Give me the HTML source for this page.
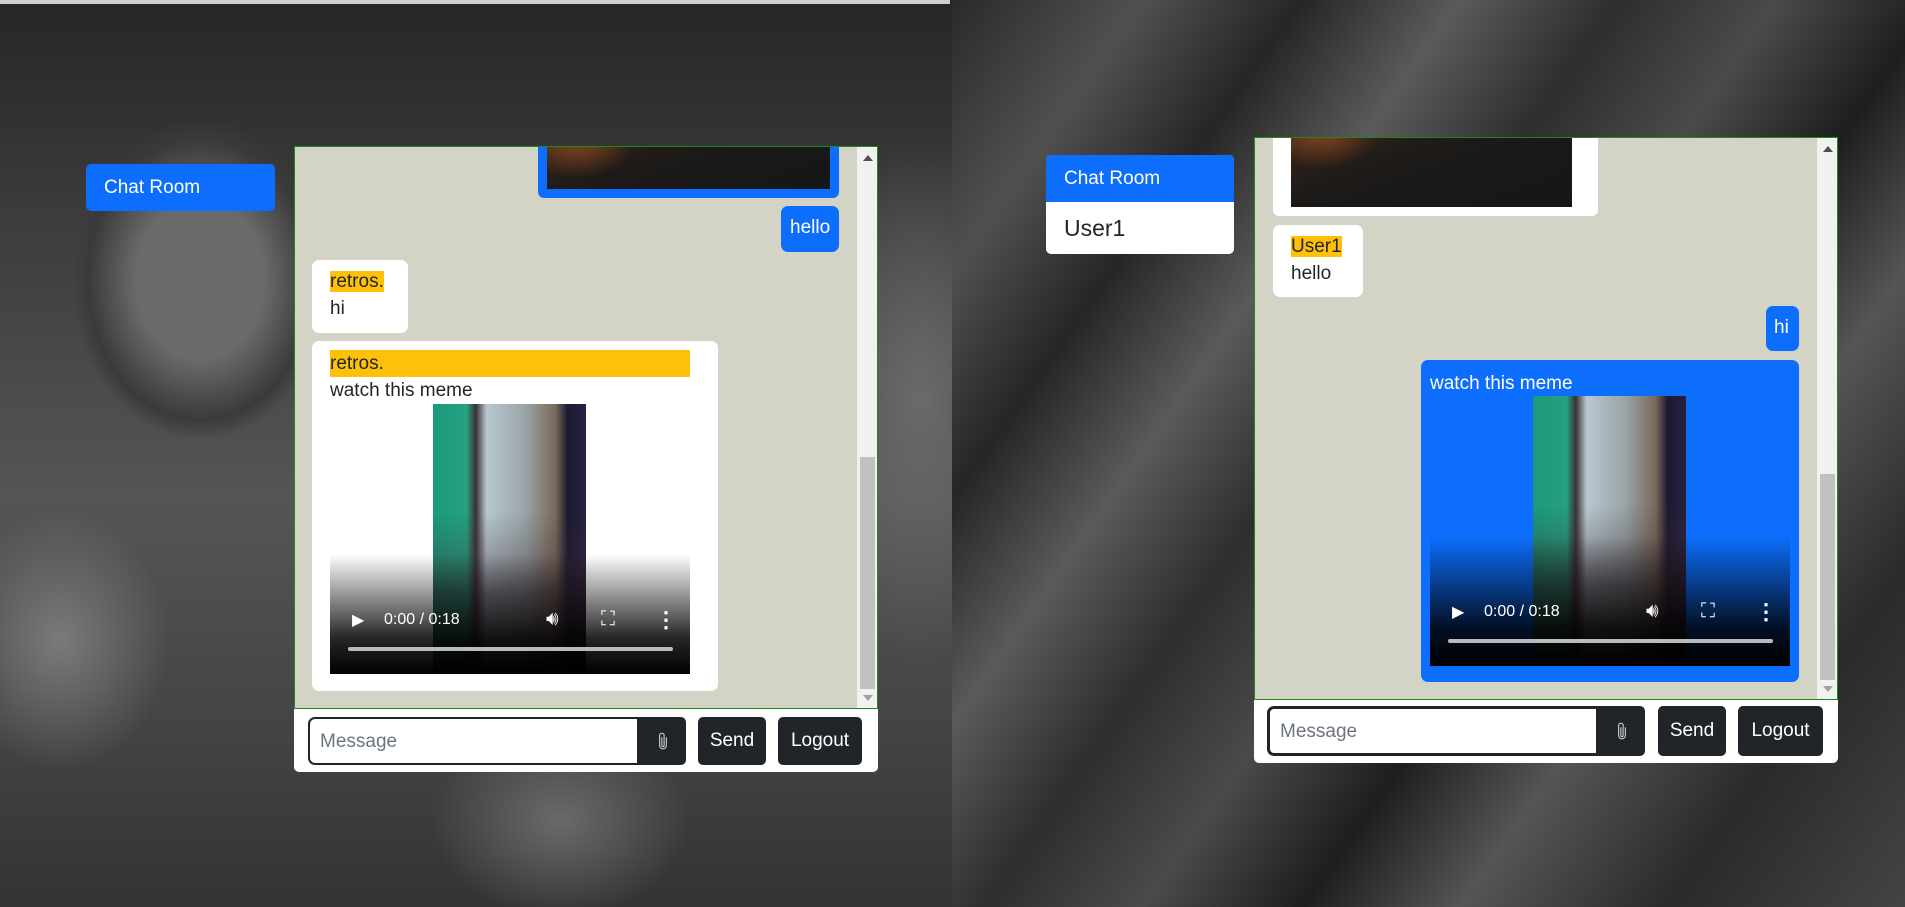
<!DOCTYPE html>
<html><head><meta charset="utf-8"><style>
*{box-sizing:border-box;margin:0;padding:0}
body{width:1905px;height:907px;overflow:hidden;position:relative;font-family:"Liberation Sans",sans-serif;font-size:19px;color:#212529}
.a{position:absolute}
.bgL{left:0;top:0;width:952px;height:907px;background:
radial-gradient(ellipse 110px 130px at 60px 640px,#7a7a7a,transparent),
radial-gradient(ellipse 130px 100px at 560px 820px,#6a6a6a,transparent),
radial-gradient(ellipse 160px 200px at 200px 280px,#6a6a6a 40%,#3a3a3a 70%,transparent 80%),
radial-gradient(ellipse 120px 260px at 920px 400px,#6a6a6a,transparent),
linear-gradient(180deg,#262626 0,#3d3d3d 25%,#555 55%,#444 80%,#333 100%)}
.bgR{left:952px;top:0;width:953px;height:907px;background:
linear-gradient(125deg,#2a2a2a 0,#505050 12%,#262626 22%,#5a5a5a 32%,#2e2e2e 42%,#4a4a4a 52%,#1e1e1e 62%,#555 72%,#2a2a2a 85%,#444 100%)}
.topline{left:0;top:0;width:950px;height:4px;background:#cfcfcf}
.btnb{background:#0d6efd;color:#fff;border-radius:5px}
.box{background:#d3d4c6;border:1px solid #1a8a1a;overflow:hidden}
.sb{background:#f1f1f1}
.th{background:#c1c1c1}
.bub{border-radius:7px}
.w{background:#fff}
.name{background:#ffc107}
.dark{background:#212529;color:#fff;border-radius:5px;text-align:center}
.vid{background:#fff}
.frame{background:
radial-gradient(ellipse 20px 30px at 40px 300px,#d8d040,transparent),
linear-gradient(180deg,transparent 0,transparent 40%,rgba(60,40,50,.5) 70%),
linear-gradient(90deg,#1a9a7a 0,#26a080 22%,#3a3035 28%,#b8c8d0 35%,#9aa5a8 60%,#7a6a5a 80%,#1a1a30 88%,#2a2040 100%)}
.ctrl{color:#fff;font-size:16px}
.img{background:radial-gradient(ellipse 60px 40px at 30px 0,#8a4a20,transparent),linear-gradient(160deg,#3a2618 0,#1d1a18 40%,#141618 100%)}
</style></head><body>
<div class="a bgL"></div><div class="a bgR"></div><div class="a topline"></div>

<svg width="0" height="0" style="position:absolute"><defs><symbol id="clip" viewBox="0 0 16 16"><path d="M4.5 3a2.5 2.5 0 0 1 5 0v9a1.5 1.5 0 0 1-3 0V5a.5.5 0 0 1 1 0v7a.5.5 0 0 0 1 0V3a1.5 1.5 0 1 0-3 0v9a2.5 2.5 0 0 0 5 0V5a.5.5 0 0 1 1 0v7a3.5 3.5 0 1 1-7 0V3z" fill="#ccc"/></symbol></defs></svg>

<!-- LEFT -->
<div class="a btnb" style="left:86px;top:164px;width:189px;height:47px;padding:13px 18px;font-size:19px">Chat Room</div>
<div class="a box" style="left:294px;top:146px;width:584px;height:563px">
  <div class="a btnb" style="left:243px;top:-10px;width:301px;height:61px;border-radius:0 0 6px 6px"></div>
  <div class="a img" style="left:252px;top:-10px;width:283px;height:52px"></div>
  <div class="a btnb bub" style="left:486px;top:59px;width:58px;height:46px;padding:11px 9px">hello</div>
  <div class="a w bub" style="left:17px;top:113px;width:96px;height:73px;padding:8px 18px;line-height:27px"><span class="name">retros.</span><br>hi</div>
  <div class="a w bub" style="left:17px;top:194px;width:406px;height:350px">
    <div class="a name" style="left:18px;top:9px;width:360px;height:27px;line-height:27px">retros.</div>
    <div class="a" style="left:18px;top:36px;line-height:27px">watch this meme</div>
    <div class="a vid" style="left:18px;top:63px;width:360px;height:270px">
      <div class="a frame" style="left:103px;top:0;width:153px;height:270px"></div>
      <div class="a" style="left:0;top:150px;width:360px;height:120px;background:linear-gradient(180deg,rgba(0,0,0,0),rgba(0,0,0,.85) 70%,#000)"></div>
      <div class="a ctrl" style="left:22px;top:206px">▶</div>
      <div class="a ctrl" style="left:54px;top:207px">0:00 / 0:18</div>
      <div class="a ctrl" style="left:216px;top:204px;font-size:20px">🔊︎</div>
      <div class="a ctrl" style="left:271px;top:204px;font-size:20px">⛶</div>
      <div class="a ctrl" style="left:325px;top:203px;font-size:22px;font-weight:bold">⋮</div>
      <div class="a" style="left:18px;top:243px;width:325px;height:4px;background:#bbb;border-radius:2px"></div>
    </div>
  </div>
  <div class="a sb" style="left:562px;top:0;width:21px;height:562px">
    <div class="a" style="left:6px;top:8px;border:5px solid transparent;border-bottom:6px solid #505050;border-top:0"></div>
    <div class="a th" style="left:3px;top:310px;width:15px;height:232px"></div>
    <div class="a" style="left:6px;top:548px;border:5px solid transparent;border-top:6px solid #a0a0a0;border-bottom:0"></div>
  </div>
</div>
<div class="a w" style="left:294px;top:709px;width:584px;height:63px;border-radius:0 0 5px 5px">
  <div class="a" style="left:14px;top:8px;width:331px;height:48px;border:2px solid #212529;border-radius:7px 0 0 7px;padding:12px 10px;color:#6c757d;font-size:19px">Message</div>
  <div class="a dark" style="left:345px;top:8px;width:47px;height:48px;border-radius:0 5px 5px 0;padding-top:14px"><svg width="18" height="20"><use href="#clip"/></svg></div>
  <div class="a dark" style="left:404px;top:8px;width:68px;height:48px;padding-top:13px">Send</div>
  <div class="a dark" style="left:484px;top:8px;width:84px;height:48px;padding-top:13px">Logout</div>
</div>

<!-- RIGHT -->
<div class="a" style="left:1046px;top:155px;width:188px;height:99px;border-radius:5px;overflow:hidden;background:#fff">
  <div style="background:#0d6efd;color:#fff;height:47px;padding:13px 18px">Chat Room</div>
  <div style="padding:13px 18px;font-size:23px">User1</div>
</div>
<div class="a box" style="left:1254px;top:137px;width:584px;height:563px">
  <div class="a w bub" style="left:18px;top:-10px;width:325px;height:88px;border-radius:0 0 6px 6px"></div>
  <div class="a img" style="left:36px;top:-10px;width:281px;height:79px"></div>
  <div class="a w bub" style="left:18px;top:87px;width:90px;height:72px;padding:8px 18px;line-height:27px"><span class="name">User1</span><br>hello</div>
  <div class="a btnb bub" style="left:511px;top:168px;width:33px;height:45px;padding:11px 8px">hi</div>
  <div class="a btnb bub" style="left:166px;top:222px;width:378px;height:322px">
    <div class="a" style="left:9px;top:10px;line-height:27px;color:#fff">watch this meme</div>
    <div class="a" style="left:9px;top:36px;width:360px;height:270px;background:#0d6efd">
      <div class="a frame" style="left:103px;top:0;width:153px;height:270px"></div>
      <div class="a" style="left:0;top:140px;width:360px;height:130px;background:linear-gradient(180deg,rgba(0,0,0,0),rgba(0,0,0,.85) 70%,#000)"></div>
      <div class="a ctrl" style="left:22px;top:206px">▶</div>
      <div class="a ctrl" style="left:54px;top:207px">0:00 / 0:18</div>
      <div class="a ctrl" style="left:216px;top:204px;font-size:20px">🔊︎</div>
      <div class="a ctrl" style="left:271px;top:204px;font-size:20px">⛶</div>
      <div class="a ctrl" style="left:325px;top:203px;font-size:22px;font-weight:bold">⋮</div>
      <div class="a" style="left:18px;top:243px;width:325px;height:4px;background:#bbb;border-radius:2px"></div>
    </div>
  </div>
  <div class="a sb" style="left:562px;top:0;width:21px;height:562px">
    <div class="a" style="left:6px;top:8px;border:5px solid transparent;border-bottom:6px solid #505050;border-top:0"></div>
    <div class="a th" style="left:3px;top:336px;width:15px;height:206px"></div>
    <div class="a" style="left:6px;top:548px;border:5px solid transparent;border-top:6px solid #a0a0a0;border-bottom:0"></div>
  </div>
</div>
<div class="a w" style="left:1254px;top:700px;width:584px;height:63px;border-radius:0 0 5px 5px">
  <div class="a" style="left:13px;top:6px;width:332px;height:50px;border:3px solid #212529;border-radius:7px 0 0 7px;padding:12px 10px;color:#6c757d;font-size:19px">Message</div>
  <div class="a dark" style="left:345px;top:6px;width:46px;height:50px;border-radius:0 5px 5px 0;padding-top:15px"><svg width="18" height="20"><use href="#clip"/></svg></div>
  <div class="a dark" style="left:404px;top:6px;width:68px;height:50px;padding-top:14px">Send</div>
  <div class="a dark" style="left:484px;top:6px;width:85px;height:50px;padding-top:14px">Logout</div>
</div>
</body></html>
